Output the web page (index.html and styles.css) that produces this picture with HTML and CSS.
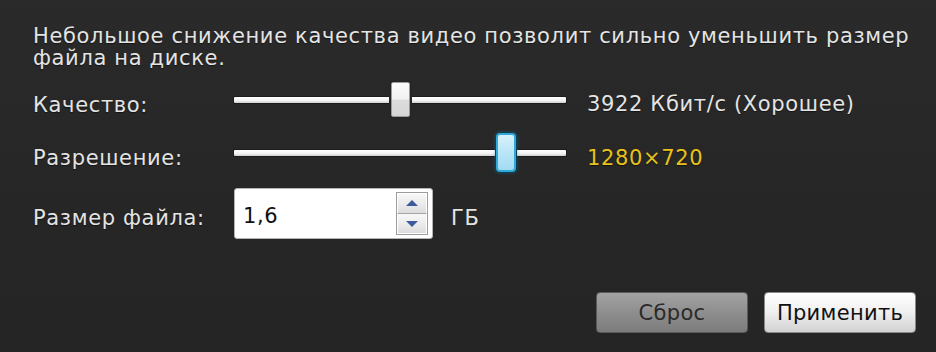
FILE: index.html
```html
<!DOCTYPE html>
<html lang="ru">
<head>
<meta charset="utf-8">
<link rel="stylesheet" href="styles.css">
</head>
<body>
<div class="panel">
  <p class="intro">Небольшое снижение качества видео позволит сильно уменьшить размер файла на диске.</p>
  <div class="row row-quality">
    <div class="label">Качество:</div>
    <div class="slider">
      <div class="track"></div>
      <div class="thumb" style="left:47.3%"></div>
    </div>
    <div class="value">3922 Кбит/с (Хорошее)</div>
  </div>
  <div class="row row-res">
    <div class="label">Разрешение:</div>
    <div class="slider">
      <div class="track"></div>
      <div class="thumb thumb-active" style="left:78.9%"></div>
    </div>
    <div class="value value-accent">1280×720</div>
  </div>
  <div class="row row-size">
    <div class="label">Размер файла:</div>
    <div class="spinbox">
      <span class="spin-text">1,6</span>
      <div class="spin-buttons">
        <div class="spin-btn"><svg width="14" height="8" viewBox="0 0 14 8"><path d="M7 1 L13 7 H1 Z" fill="#3d5a9e"/></svg></div>
        <div class="spin-btn"><svg width="14" height="8" viewBox="0 0 14 8"><path d="M1 1 H13 L7 7 Z" fill="#3d5a9e"/></svg></div>
      </div>
    </div>
    <div class="unit">ГБ</div>
  </div>
  <div class="actions">
    <button class="btn btn-disabled">Сброс</button>
    <button class="btn btn-primary">Применить</button>
  </div>
</div>
</body>
</html>
```

FILE: styles.css
```css
html, body {
  margin: 0;
  padding: 0;
}
body {
  width: 936px;
  height: 352px;
  overflow: hidden;
  background: linear-gradient(180deg, #2a2a2a 0%, #262626 60%, #252525 100%);
  font-family: "DejaVu Sans", Verdana, sans-serif;
  font-size: 21px;
  letter-spacing: 0.65px;
  color: #e4e4e4;
}
.panel {
  padding: 25px 20px 0 33px;
  display: flex;
  flex-direction: column;
}
.intro {
  margin: 0;
  line-height: 22px;
  text-shadow: 0 1px 1px rgba(0,0,0,0.5);
}
.row {
  display: flex;
  align-items: center;
}
.row-quality {
  margin-top: 13px;
  height: 36px;
}
.row-res {
  margin-top: 15px;
  height: 40px;
}
.row-size {
  margin-top: 15px;
  height: 51px;
}
.label {
  width: 201px;
  flex: none;
  padding-top: 9px;
  text-shadow: 0 1px 1px rgba(0,0,0,0.5);
}
.slider {
  position: relative;
  width: 332px;
  height: 100%;
  flex: none;
  display: flex;
  align-items: center;
}
.track {
  width: 100%;
  height: 6px;
  background: linear-gradient(180deg, #ffffff 0%, #f2f2f2 60%, #cfcfcf 100%);
  border-radius: 1px;
  box-shadow: 0 0 0 1px #1c1c1c;
}
.thumb {
  position: absolute;
  top: 0;
  width: 17px;
  height: 33px;
  border: 1px solid #9a9a9a;
  border-radius: 2px;
  background: linear-gradient(180deg, #fbfbfb 0%, #f1f1f1 48%, #dcdcdc 52%, #d6d6d6 100%);
  box-shadow: 0 0 0 2px #262626;
}
.thumb-active {
  width: 16px;
  height: 35px;
  border: 2px solid #31a9d8;
  border-radius: 4px;
  background: linear-gradient(180deg, #d8f1fb 0%, #b9e5f7 50%, #a3dbf3 100%);
  box-shadow: 0 0 0 1px #0f3c50, 0 0 3px 1px rgba(30,140,190,0.5);
}
.value {
  margin-left: 21px;
  padding-top: 8px;
  white-space: nowrap;
  text-shadow: 0 1px 1px rgba(0,0,0,0.5);
}
.value-accent {
  color: #e8c21c;
  padding-top: 9px;
}
.spinbox {
  width: 199px;
  height: 51px;
  box-sizing: border-box;
  flex: none;
  background: #ffffff;
  border: 1px solid #b4b4b4;
  border-radius: 3px;
  display: flex;
  align-items: center;
  justify-content: space-between;
  padding: 0 4px 0 8px;
}
.spin-text {
  color: #111;
  padding-top: 5px;
}
.spin-buttons {
  display: flex;
  flex-direction: column;
  width: 32px;
  height: 43px;
  border: 1px solid #9c9c9c;
  box-sizing: border-box;
  background: #e8e8e8;
}
.spin-btn {
  flex: 1;
  display: flex;
  align-items: center;
  justify-content: center;
  background: linear-gradient(180deg, #f7f7f7 0%, #e9e9e9 60%, #dcdcdc 100%);
  border: 1px solid #ffffff;
  border-bottom-color: #a8a8a8;
}
.spin-btn + .spin-btn {
  border-top-color: #f4f4f4;
  border-bottom-color: #ffffff;
}
.unit {
  margin-left: 18px;
  padding-top: 9px;
}
.actions {
  display: flex;
  justify-content: flex-end;
  gap: 16px;
  margin-top: 53px;
}
.btn {
  width: 152px;
  height: 41px;
  border-radius: 4px;
  font-family: "DejaVu Sans", Verdana, sans-serif;
  font-size: 21px;
  letter-spacing: 0.3px;
  padding: 0;
  cursor: default;
}
.btn-disabled {
  background: linear-gradient(180deg, #a3a3a3 0%, #8e8e8e 50%, #7c7c7c 100%);
  border: 1px solid #5a5a5a;
  color: #2a2a2a;
}
.btn-primary {
  background: linear-gradient(180deg, #ffffff 0%, #f1f1f1 45%, #d2d2d2 100%);
  border: 1px solid #8a8a8a;
  color: #111;
}
```
